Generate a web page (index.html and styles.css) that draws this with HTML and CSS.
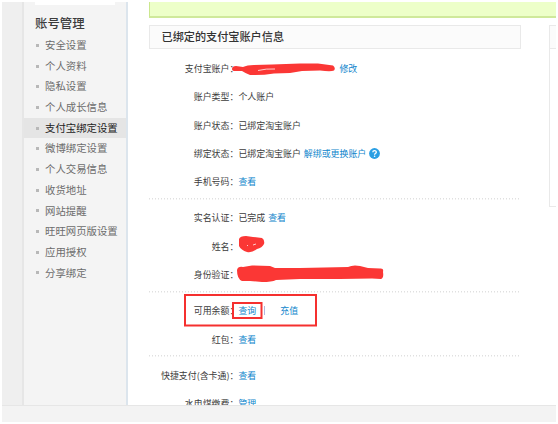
FILE: index.html
```html
<!DOCTYPE html>
<html lang="zh-CN">
<head>
    <meta charset="UTF-8">
    <title>支付宝绑定设置</title>
    <link rel="stylesheet" href="styles.css">
</head>
<body>

<div class="page">
    <div class="layout">

        <!-- 左侧菜单 -->
        <div class="gutter"></div>
        <div class="sidebar">
            <div class="sidebar-top"></div>
            <h2>账号管理</h2>
            <ul class="menu">
                <li>安全设置</li>
                <li>个人资料</li>
                <li>隐私设置</li>
                <li>个人成长信息</li>
                <li class="selected">支付宝绑定设置</li>
                <li>微博绑定设置</li>
                <li>个人交易信息</li>
                <li>收货地址</li>
                <li>网站提醒</li>
                <li>旺旺网页版设置</li>
                <li>应用授权</li>
                <li>分享绑定</li>
            </ul>
        </div>

        <!-- 主要内容 -->
        <div class="content">
            <div class="notice"></div>
            <div class="columns">
                <div class="main">
                    <h3>已绑定的支付宝账户信息</h3>
                    <div class="section">
                        <div class="row"><span class="label">支付宝账户：</span><span class="account"></span><a>修改</a></div>
                        <div class="row"><span class="label">账户类型：</span>个人账户</div>
                        <div class="row"><span class="label">账户状态：</span>已绑定淘宝账户</div>
                        <div class="row">
                            <span class="label">绑定状态：</span>已绑定淘宝账户<a class="next">解绑或更换账户</a>
                            <svg class="help" width="11" height="11" viewBox="0 0 11 11">
                                <circle cx="5.5" cy="5.5" r="5.4" fill="#2a9fe4"/>
                                <path d="M3.8 4.3C3.8 2 7.3 2 7.3 4.2C7.3 5.4 5.6 5.3 5.6 6.7" fill="none" stroke="#fff" stroke-width="1.3"/>
                                <circle cx="5.6" cy="8.3" r="0.8" fill="#fff"/>
                            </svg>
                        </div>
                        <div class="row"><span class="label">手机号码：</span><a>查看</a></div>
                    </div>
                    <div class="section">
                        <div class="row"><span class="label">实名认证：</span>已完成<a class="next">查看</a></div>
                        <div class="row"><span class="label">姓名：</span></div>
                        <div class="row"><span class="label">身份验证：</span></div>
                    </div>
                    <div class="section">
                        <div class="row"><span class="label">可用余额：</span><a>查询</a><span class="divider"></span><a>充值</a></div>
                        <div class="row"><span class="label">红包：</span><a>查看</a></div>
                    </div>
                    <div class="section">
                        <div class="row"><span class="label">快捷支付(含卡通)：</span><a>查看</a></div>
                        <div class="row"><span class="label">水电煤缴费：</span><a>管理</a></div>
                    </div>
                </div>
                <div class="aside"><div class="aside-head"></div></div>
            </div>
        </div>
    </div>
    <div class="footer"></div>

    <!-- 红色涂抹和标记框 -->
    <svg class="marks" width="558" height="424" viewBox="0 0 558 424">
        <g fill="#fb3735">
            <path d="M232 69Q232 66 236 66L243 67Q247 65 254 65L272 64.5L300 63.5L318 63.5L333 65.5Q336 68 334 70.5Q331 72 320 70.5L302 71L290 73L274 73.5Q262 75.5 250 75Q245 73 242 71L235 71Q232 71 232 69Z"/>
            <path d="M239 239Q240 236 246 236L253 237L262 238Q265 240 264 244Q262 248 257 249Q252 253 247 252Q241 250 239 246Z"/>
            <path d="M237 270Q238 266 243 267L252 265.5L270 266L275 268L300 268L348 267Q353 264.5 360 266L368 268L380 268.5Q384 268 383 272Q384 278 381 279L372 278.5L340 279L300 279L276 280Q272 282 262 282L250 281L242 281Q237 279 237 270Z"/>
        </g>
        <path d="M258 70.5Q266 68.5 275 69M247 246L248 245M253 245L256 244" fill="none" stroke="#fdd" stroke-width="0.9"/>
        <g fill="none" stroke="#f5302f" stroke-width="2">
            <rect x="185" y="295" width="131" height="30.5"/>
            <rect x="233" y="303" width="28.5" height="15"/>
        </g>
    </svg>
</div>

</body>
</html>
```
FILE: styles.css
```css
body {
    margin: 0;
    background: #fff;
    font-family: "Noto Sans CJK SC", sans-serif;
    color: #3c3c3c;
}
.page {
    position: relative;
    box-sizing: border-box;
    width: 558px;
    height: 424px;
    padding: 2px;
    overflow: hidden;
}
.layout {
    display: flex;
    height: 403px;
    overflow: hidden;
}
.gutter {
    width: 20px;
    background: #efefef;
}
.sidebar {
    box-sizing: border-box;
    width: 106px;
    background: #f4f4f4;
    border-left: 2px solid #e6e6e6;
    border-right: 2px solid #dce5ed;
}
.sidebar-top {
    height: 3px;
    margin: 0 11px;
    background: #fff;
}
.sidebar h2 {
    margin: 7px 0 1px 11px;
    font-size: 12.4px;
    line-height: 22px;
    font-weight: 500;
}
.menu {
    margin: 0;
    padding: 0;
    list-style: none;
    font-size: 10.4px;
    line-height: 20.7px;
    color: #6c6c6c;
}
.menu li {
    display: flex;
    align-items: center;
    height: 20.7px;
    white-space: nowrap;
}
.menu li::before {
    content: "";
    width: 3px;
    height: 3px;
    margin: 0 6px 0 12px;
    background: #b8b8b8;
}
.menu .selected {
    background: #e5e5e5;
    color: #222;
}
.content {
    flex: 1;
    min-width: 0;
    padding-left: 21px;
}
.notice {
    height: 14px;
    background: #edffc9;
    border-left: 1px solid #cbe78e;
    border-bottom: 2px solid #cfe99b;
}
.columns {
    display: flex;
    gap: 28px;
    margin-top: 7px;
}
.main {
    width: 372px;
    font-size: 8.94px;
}
.main h3 {
    box-sizing: border-box;
    height: 24px;
    margin: 0 0 5.3px;
    padding-left: 11.5px;
    border: 1px solid #e9e9e9;
    background: #fbfbfb;
    font-size: 11.15px;
    line-height: 21px;
    font-weight: 500;
    color: #333;
}
.section {
    padding-bottom: 2px;
}
.section + .section {
    padding-top: 6px;
    background: repeating-linear-gradient(90deg, #e0e0e0 0, #e0e0e0 1.5px, #fff 1.5px, #fff 3px) 0 0 / 371px 1.5px no-repeat;
}
.row {
    display: flex;
    align-items: center;
    height: 28.3px;
    white-space: nowrap;
}
.label {
    width: 89.4px;
    display: flex;
    justify-content: flex-end;
}
.row a {
    color: #0f86cc;
}
.account {
    width: 101px;
}
.row .next {
    margin-left: 3px;
}
.help {
    margin-left: 3px;
}
.divider {
    width: 1px;
    height: 9px;
    margin: 0 15px 0 8px;
    background: #b0b8e0;
}
.aside {
    box-sizing: border-box;
    flex: 1;
    height: 182px;
    border: 1px solid #e9e9e9;
    border-right: 0;
}
.aside-head {
    height: 22px;
    border-bottom: 1px solid #e9e9e9;
    background: #fbfbfb;
}
.footer {
    box-sizing: border-box;
    height: 17px;
    background: #f3f3f3;
    border-top: 1px solid #e6e6e6;
}
.marks {
    position: absolute;
    left: 0;
    top: 0;
}
```
